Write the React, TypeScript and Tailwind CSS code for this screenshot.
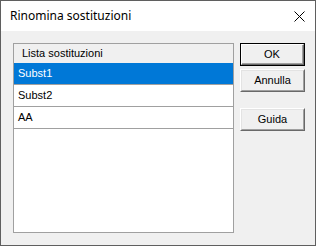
import React from "react";

const btnBase =
  "w-[65px] flex items-center justify-center text-[11px] text-black bg-[#f0f0f0]";

function Btn({ label, def, h = "h-[23px]" }: { label: string; def?: boolean; h?: string }) {
  if (def) {
    return (
      <div className={`w-[65px] ${h} border border-black flex`}>
        <div className="flex-1 flex border-t border-l border-t-white border-l-white border-r border-b border-r-[#696969] border-b-[#696969]">
          <div className="flex-1 flex items-center justify-center border-r border-b border-r-[#a0a0a0] border-b-[#a0a0a0] bg-[#f0f0f0] text-[11px] text-black">
            {label}
          </div>
        </div>
      </div>
    );
  }
  return (
    <div className={`w-[65px] ${h} flex border-t border-l border-t-white border-l-white border-r border-b border-r-[#696969] border-b-[#696969]`}>
      <div className="flex-1 flex items-center justify-center border-t border-l border-t-[#e3e3e3] border-l-[#e3e3e3] border-r border-b border-r-[#a0a0a0] border-b-[#a0a0a0] bg-[#f0f0f0] text-[11px] text-black">
        {label}
      </div>
    </div>
  );
}

export default function App() {
  const rows = ["Subst1", "Subst2", "AA"];
  return (
    <div
      className="w-[316px] h-[246px] border border-[#5f5f5f] flex flex-col bg-[#f0f0f0]"
      style={{ fontFamily: '"Liberation Sans", Arial, sans-serif' }}
    >
      <div className="h-[30px] bg-white flex items-center justify-between pl-[9px] pr-[10px] shrink-0">
        <span
          className="text-[12px] text-black"
          style={{ fontFamily: '"Noto Sans", "Liberation Sans", sans-serif' }}
        >
          Rinomina sostituzioni
        </span>
        <svg width="11" height="11" viewBox="0 0 11 11" className="mt-[1px]">
          <path d="M0.5 0.5 L10.5 10.5 M10.5 0.5 L0.5 10.5" stroke="#000" strokeWidth="1" />
        </svg>
      </div>
      <div className="flex-1 flex pl-[12px] pt-[12px] gap-[6px]">
        <div className="w-[221px] h-[190px] border border-[#a0a0a0] bg-white flex flex-col">
          <div className="h-[19px] bg-[#f0f0f0] flex items-center pl-[8px] text-[11px] text-black">
            Lista sostituzioni
          </div>
          {rows.map((r, i) => (
            <div
              key={r}
              className={`h-[22px] border-b border-[#a0a0a0] flex items-center pl-[4px] text-[11px] ${
                i === 0 ? "bg-[#0078d7] text-white" : "bg-white text-black"
              }`}
            >
              {r}
            </div>
          ))}
        </div>
        <div className="flex flex-col">
          <Btn label="OK" def />
          <div className="h-[3px]" />
          <Btn label="Annulla" />
          <div className="h-[16px]" />
          <Btn label="Guida" />
        </div>
      </div>
    </div>
  );
}
